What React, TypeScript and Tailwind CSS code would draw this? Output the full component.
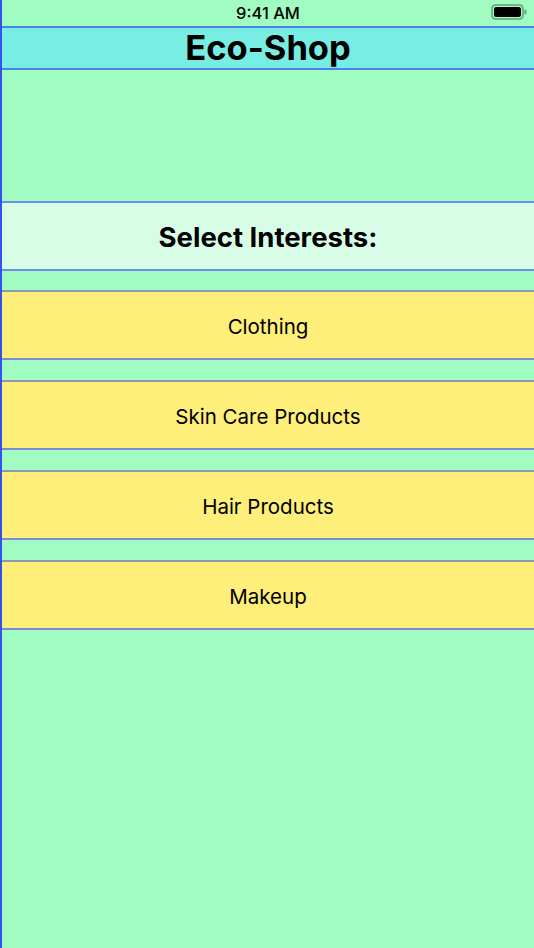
const interests = ['Clothing', 'Skin Care Products', 'Hair Products', 'Makeup'];

function Battery() {
  return (
    <svg width="36" height="16" viewBox="0 0 36 16" className="block">
      <rect x="1" y="1" width="31" height="14" rx="3.5" fill="none" stroke="#5f9d78" strokeWidth="1.5" />
      <rect x="3" y="3" width="27" height="10" rx="2" fill="#000" />
      <rect x="33.5" y="5.5" width="1.8" height="5" rx="0.9" fill="#5f9d78" />
    </svg>
  );
}

export default function App() {
  return (
    <div
      className="min-h-[948px] w-[534px] bg-[#a0fcc0] border-l-2 border-[#3552f0] text-black"
      style={{ fontFamily: 'Inter, "Liberation Sans", sans-serif' }}
    >
      {/* Status bar */}
      <div className="relative h-[26px] flex items-center justify-center">
        <span className="text-[16.5px] font-medium">9:41 AM</span>
        <div className="absolute right-[7px] top-[4px]">
          <Battery />
        </div>
      </div>

      {/* Header */}
      <div className="h-[44px] bg-[#78ede3] border-y-2 border-[#4a82ea] flex items-center justify-center">
        <h1 className="text-[34.5px] font-bold leading-none pt-[1px]">Eco-Shop</h1>
      </div>

      <div className="h-[131px]" />

      {/* Title */}
      <div className="h-[70px] bg-[#d8fde6] border-y-2 border-[#6f8ff0] flex items-center justify-center">
        <h2 className="text-[27.5px] font-bold leading-none pt-[3px]">Select Interests:</h2>
      </div>

      <div className="flex flex-col gap-[20px] pt-[19px]">
        {interests.map((item) => (
          <button
            key={item}
            className="h-[70px] w-full bg-[#feee7a] border-t-2 border-t-[#9297b0] border-b-2 border-b-[#7c8ad8] flex items-center justify-center pt-[4px] text-[20.5px]"
          >
            {item}
          </button>
        ))}
      </div>
    </div>
  );
}
